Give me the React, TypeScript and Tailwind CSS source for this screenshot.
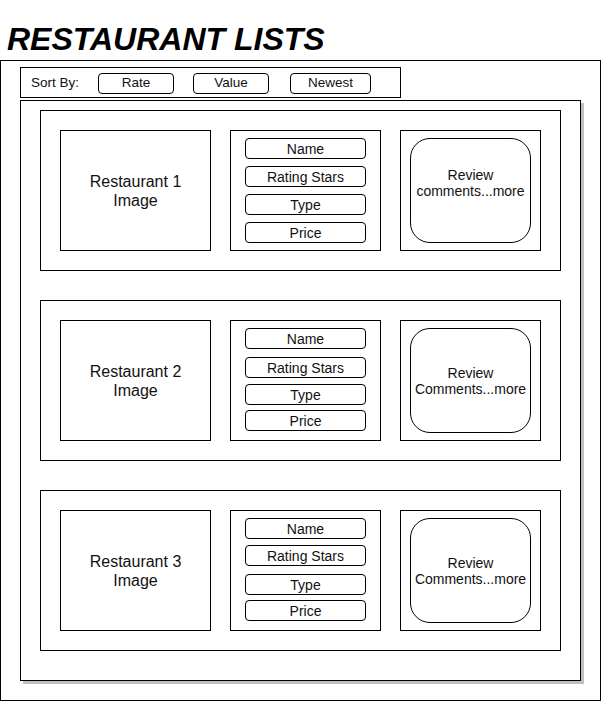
import React from "react";

const InfoBtn = ({ label, cls }: { label: string; cls: string }) => (
  <div className={`${cls} w-[121px] h-[21px] shrink-0 border border-black rounded-[4px] flex items-center justify-center text-[14px] leading-none text-[#111]`}>
    {label}
  </div>
);

const LABELS = ["Name", "Rating Stars", "Type", "Price"];

const Card = ({
  n,
  review,
  tops,
  reviewCls,
}: {
  n: number;
  review: string;
  tops: string[];
  reviewCls: string;
}) => (
  <div className="w-[521px] h-[161px] border border-black flex gap-[19px] pt-[19px] pl-[19px]">
    <div className="w-[151px] h-[121px] border border-black flex items-center justify-center text-center text-[16px] leading-[19px] text-[#111]">
      <span>
        Restaurant {n}
        <br />
        Image
      </span>
    </div>
    <div className="w-[151px] h-[121px] border border-black flex flex-col items-center">
      {LABELS.map((l, i) => (
        <InfoBtn key={l} label={l} cls={tops[i]} />
      ))}
    </div>
    <div className="w-[141px] h-[121px] border border-black pt-[7px] pl-[9px]">
      <div className={`${reviewCls} w-[121px] h-[105px] border border-black rounded-[20px] flex items-center justify-center text-center text-[14px] leading-[16px] text-[#111]`}>
        <span>
          Review
          <br />
          {review}
        </span>
      </div>
    </div>
  </div>
);

export default function App() {
  return (
    <div className="w-[611px] h-[701px] bg-white font-['Liberation_Sans',Arial,sans-serif] text-black overflow-hidden">
      <div className="h-[60px] pl-[7px] pt-[23px]">
        <h1 className="text-[32px] leading-[32px] font-bold italic">RESTAURANT LISTS</h1>
      </div>
      <div className="w-[601px] h-[641px] border border-black pt-[6px] pl-[19px]">
        <div className="w-[381px] h-[31px] border border-black flex items-center pl-[10px] pt-[1px] text-[13.5px] leading-none text-[#111]">
          <span className="w-[67px]">Sort By:</span>
          <div className="w-[76px] h-[21px] border border-black rounded-[4px] flex items-center justify-center">Rate</div>
          <div className="ml-[19px] w-[76px] h-[21px] border border-black rounded-[4px] flex items-center justify-center">Value</div>
          <div className="ml-[21px] w-[81px] h-[21px] border border-black rounded-[4px] flex items-center justify-center">Newest</div>
        </div>
        <div className="mt-[2px] w-[561px] h-[581px] border border-black shadow-[3px_3px_0_#c0c0c0] pt-[9px] pl-[19px] flex flex-col gap-[29px]">
          <Card
            n={1}
            review="comments...more"
            tops={["mt-[7px]", "mt-[7px]", "mt-[7px]", "mt-[7px]"]}
            reviewCls="pb-[16px]"
          />
          <Card
            n={2}
            review="Comments...more"
            tops={["mt-[7px]", "mt-[8px]", "mt-[6px]", "mt-[5px]"]}
            reviewCls=""
          />
          <Card
            n={3}
            review="Comments...more"
            tops={["mt-[7px]", "mt-[6px]", "mt-[8px]", "mt-[5px]"]}
            reviewCls=""
          />
        </div>
      </div>
    </div>
  );
}
